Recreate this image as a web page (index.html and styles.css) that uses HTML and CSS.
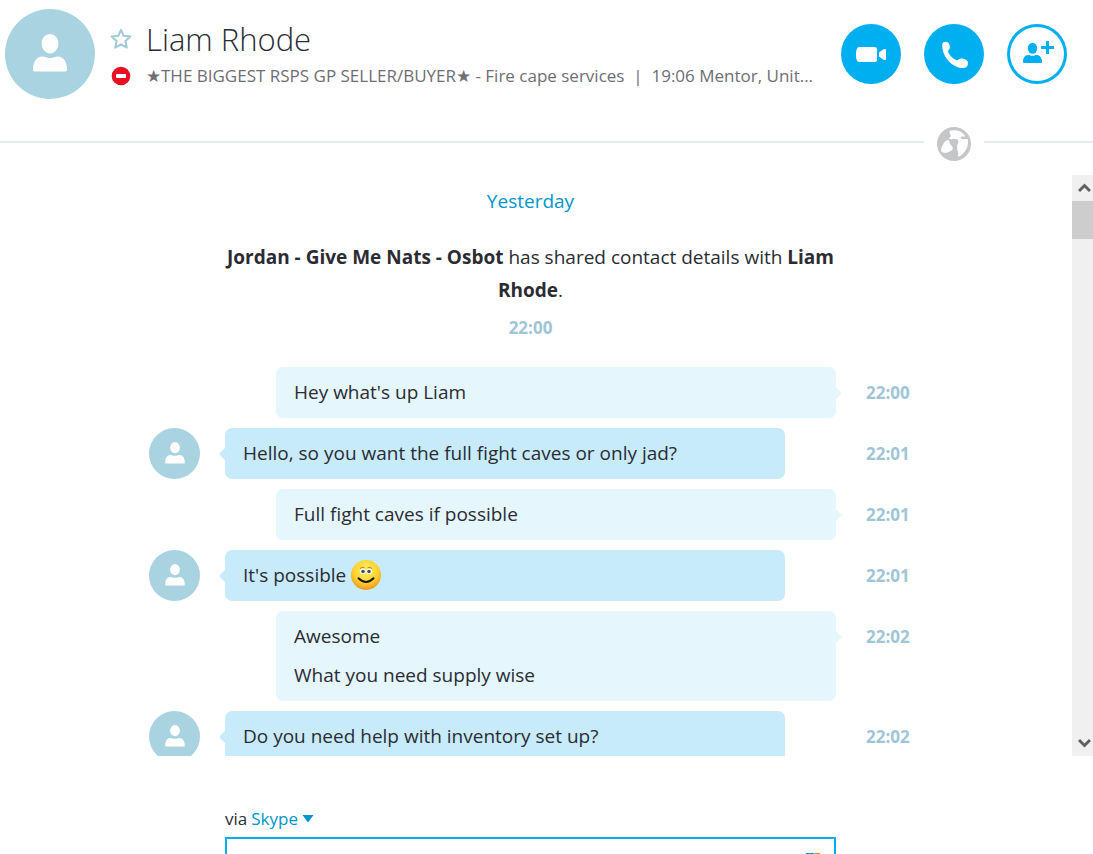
FILE: index.html
```html
<!DOCTYPE html>
<html lang="en">
<head>
    <meta charset="UTF-8">
    <meta name="viewport" content="width=device-width, initial-scale=1.0">
    <title>Liam Rhode</title>
    <link rel="stylesheet" href="styles.css">
</head>
<body>
    <!-- Shared icons -->
    <svg class="sprite" aria-hidden="true">
        <symbol id="icon-person" viewBox="0 0 34 40">
            <ellipse cx="17" cy="9.700" rx="8.500" ry="9.700"/>
            <path d="M2 37.500C.7 37.500 0 37 0 35.500 0 28 3.500 22.500 9 22.500c3.500 0 4 1.500 8 1.500s4.500-1.500 8-1.500c5.500 0 9 5.500 9 13 0 1.500-.7 2-2 2z"/>
        </symbol>
    </svg>

    <header class="header">
        <div class="avatar avatar-large">
            <svg aria-hidden="true"><use href="#icon-person"/></svg>
        </div>
        <div class="contact">
            <div class="contact-row">
                <button class="icon-btn" aria-label="Add to favourites">
                    <svg width="22" height="22" viewBox="0 0 22 22" fill="none" stroke="#a2c9d9" stroke-width="2" stroke-linejoin="round" aria-hidden="true">
                        <path d="M11 1.800l2.700 6 6.700.7-5 4.500 1.400 6.600-5.800-3.300-5.800 3.300L6.600 13l-5-4.500 6.700-.7z"/>
                    </svg>
                </button>
                <h1>Liam Rhode</h1>
            </div>
            <div class="contact-row">
                <svg class="presence" width="22" height="20" viewBox="0 0 22 20" role="img" aria-label="Do not disturb">
                    <circle cx="11" cy="10" r="9.300" fill="#e81123"/>
                    <rect x="6" y="8" width="10" height="4" rx="1" fill="#fff"/>
                </svg>
                <p class="mood">★THE BIGGEST RSPS GP SELLER/BUYER★ - Fire cape services&nbsp; |&nbsp; 19:06 Mentor, Unit...</p>
            </div>
        </div>
        <div class="call-actions">
            <button class="round-btn" aria-label="Video call">
                <svg width="60" height="60" viewBox="0 0 60 60" fill="#fff" aria-hidden="true">
                    <path d="M18 23h15.500q2.500 0 2.500 2.500v10q0 2.500-2.500 2.500H18q-3 0-3-7.500t3-7.500z"/>
                    <path d="M38 28.500l4.500-3.200q2.500-1 2.500.7v9q0 1.700-2.500.7L38 32.500z"/>
                </svg>
            </button>
            <button class="round-btn" aria-label="Call">
                <svg width="60" height="60" viewBox="0 0 60 60" fill="#fff" aria-hidden="true">
                    <path d="M18.200 20.500c0-1.500 1.300-2.700 3-2.700 2.300 0 3.700 1 4.300 3.200.7 2.400.5 3.500-.8 4.800-.8.9-.8 1.800-.1 3.200 1.600 3 3.500 5 6.500 6.600 1.400.8 2.400.8 3.300 0 1.500-1.200 2.900-1.300 5.400-.7 3.500.8 4.400 2.300 4.100 5.100-.3 2.600-1.900 4.100-4.900 4.100-5 0-10.600-3-15-7.700-4.100-4.500-5.800-10-5.800-15.900z"/>
                </svg>
            </button>
            <button class="round-btn round-btn-outline" aria-label="Add people">
                <svg width="60" height="60" viewBox="0 0 60 60" fill="#00aff0" aria-hidden="true">
                    <ellipse cx="25.500" cy="24.300" rx="4.700" ry="5.500"/>
                    <path d="M17.200 39c-.8 0-1.200-.4-1.200-1.300 0-3.700 2-6.700 5-6.700 2 0 2.500.8 4.500.8s2.500-.8 4.500-.8c3 0 5 3 5 6.700 0 .9-.4 1.300-1.200 1.300z"/>
                    <path d="M39 17h3v5h5v3h-5v5h-3v-5h-5v-3h5z"/>
                </svg>
            </button>
        </div>
    </header>

    <div class="divider">
        <span class="divider-line"></span>
        <svg class="globe" width="34" height="34" viewBox="0 0 34 34" aria-hidden="true">
            <circle cx="17" cy="17" r="17" fill="#c5c6c8"/>
            <path fill="#fff" d="M12.500 4C18 2.200 25 3.500 28.500 9.500c-1.500.3-3.500-.2-4.700.6-.5 1.200.8 1.900 2.200 1.900h4.800c1.200 7-2 13.500-8.300 17.500-1.700.5-1.500-1.500-1.300-3.200.2-1.800-1.200-2.800-1-5 .2-1.700-.5-3 .6-4.500.8-1.500.7-3-.3-4-2-1.300-5.500-.3-8.300-.8-.5-1.500 1.800-1.800 1.600-3.200-.2-1.800-1.700-2.800-1.300-4.800z"/>
            <path fill="#fff" d="M11.500 13c1.400 1 .8 3 1.900 4.300 1 1.500 2.400 2.200 2.400 4-.2 2.200-2 2.400-3.600 3.500-2.200 1.500-5.900 1.700-7.900-.3-.7-2.300.3-4.200 1.300-6.300 1.200-2.400 3-4.900 5.900-5.200z"/>
        </svg>
        <span class="divider-line divider-end"></span>
    </div>

    <main class="chat">
        <div class="messages" id="messages">
            <div class="column">
                <h2 class="day">Yesterday</h2>

                <div class="notice">
                    <p><strong>Jordan - Give Me Nats - Osbot</strong> has shared contact details with <strong>Liam Rhode</strong>.</p>
                    <time>22:00</time>
                </div>

                <div class="row">
                    <div class="bubble sent"><p>Hey what's up Liam</p></div>
                    <time>22:00</time>
                </div>
                <div class="row">
                    <div class="avatar"><svg aria-hidden="true"><use href="#icon-person"/></svg></div>
                    <div class="bubble received"><p>Hello, so you want the full fight caves or only jad?</p></div>
                    <time>22:01</time>
                </div>
                <div class="row">
                    <div class="bubble sent"><p>Full fight caves if possible</p></div>
                    <time>22:01</time>
                </div>
                <div class="row">
                    <div class="avatar"><svg aria-hidden="true"><use href="#icon-person"/></svg></div>
                    <div class="bubble received">
                        <p>It's possible
                            <svg class="emoticon" viewBox="0 0 30 30" role="img" aria-label="Smile">
                                <defs>
                                    <radialGradient id="face" cx="50%" cy="35%" r="65%">
                                        <stop offset="0" stop-color="#fff06a"/>
                                        <stop offset=".65" stop-color="#ffd02e"/>
                                        <stop offset="1" stop-color="#f0921f"/>
                                    </radialGradient>
                                </defs>
                                <circle cx="15" cy="15" r="15" fill="url(#face)"/>
                                <ellipse cx="11.800" cy="11.300" rx="2.900" ry="2.600" fill="#fff"/>
                                <ellipse cx="18.200" cy="11.300" rx="2.900" ry="2.600" fill="#fff"/>
                                <circle cx="12" cy="11.500" r="1.800" fill="#3f4f68"/>
                                <circle cx="18" cy="11.500" r="1.800" fill="#3f4f68"/>
                                <path d="M9 8.500q2-2 4.500-.8M16.500 7.700q2.500-1.200 4.500.8" fill="none" stroke="#c9791a" stroke-width="1"/>
                                <path d="M7.500 18.300q7.500 7.500 15 0" fill="none" stroke="#1f1408" stroke-width="2" stroke-linecap="round"/>
                            </svg>
                        </p>
                    </div>
                    <time>22:01</time>
                </div>
                <div class="row">
                    <div class="bubble sent">
                        <p>Awesome</p>
                        <p>What you need supply wise</p>
                    </div>
                    <time>22:02</time>
                </div>
                <div class="row">
                    <div class="avatar"><svg aria-hidden="true"><use href="#icon-person"/></svg></div>
                    <div class="bubble received"><p>Do you need help with inventory set up?</p></div>
                    <time>22:02</time>
                </div>
            </div>
        </div>
        <div class="scrollbar">
            <button class="scroll-btn" id="scroll-up" aria-label="Scroll up">
                <svg width="13" height="10" viewBox="0 0 13 10" aria-hidden="true"><path d="M1 8l5.500-5.500L12 8"/></svg>
            </button>
            <div class="scroll-thumb"></div>
            <button class="scroll-btn scroll-down" id="scroll-down" aria-label="Scroll down">
                <svg width="13" height="10" viewBox="0 0 13 10" aria-hidden="true"><path d="M1 2l5.500 5.500L12 2"/></svg>
            </button>
        </div>
    </main>

    <footer class="composer">
        <div class="column">
            <div class="composer-body">
                <div class="via">
                    <span>via</span>
                    <button class="via-btn">Skype
                        <svg width="12" height="8" viewBox="0 0 12 8" aria-hidden="true"><path d="M.5 0h11L6 7.500z" fill="#0095cc"/></svg>
                    </button>
                </div>
                <div class="input-box">
                    <textarea aria-label="Message" rows="2"></textarea>
                    <svg width="20" height="18" viewBox="0 0 20 18" fill="none" stroke-width="2" aria-hidden="true">
                        <path d="M2 1h8" stroke="#0095cc"/>
                        <path d="M11 1h5" stroke="#f07d1a"/>
                        <path d="M1 2v13h17V2" stroke="#8a949b"/>
                    </svg>
                </div>
            </div>
        </div>
    </footer>

    <script>
        const messages = document.getElementById('messages');

        document.getElementById('scroll-up').addEventListener('click', () => {
            messages.scrollBy(0, -60);
        });
        document.getElementById('scroll-down').addEventListener('click', () => {
            messages.scrollBy(0, 60);
        });
    </script>
</body>
</html>
```
FILE: styles.css
```css
:root {
    --blue: #00aff0;
    --link: #0095cc;
    --avatar: #a9d3e1;
    --time: #9fc6d6;
    --sent: #e5f6fd;
    --received: #c7ebfb;
    --text: #2b2c33;
}

* {
    margin: 0;
    padding: 0;
    box-sizing: border-box;
}

body {
    font-family: "Open Sans", "Noto Sans", sans-serif;
    font-size: 19px;
    line-height: 27px;
    color: var(--text);
    background-color: #fff;
    height: 100vh;
    display: flex;
    flex-direction: column;
    overflow: hidden;
}

button {
    border: none;
    background: none;
    font: inherit;
    color: inherit;
    cursor: pointer;
}

svg {
    display: block;
}

.sprite {
    position: absolute;
    width: 0;
    height: 0;
}

/* Header */
.header {
    display: flex;
    align-items: flex-start;
    padding: 9px 26px 28px 5px;
}

.avatar {
    width: 51px;
    height: 51px;
    border-radius: 50%;
    background-color: var(--avatar);
    display: flex;
    align-items: center;
    justify-content: center;
}

.avatar svg {
    width: 20px;
    height: 23px;
    fill: #fff;
}

.avatar-large {
    flex: none;
    width: 90px;
    height: 90px;
}

.avatar-large svg {
    width: 34px;
    height: 40px;
}

.contact {
    flex: 1;
    min-width: 0;
    padding: 7px 24px 0 15px;
}

.contact-row {
    display: flex;
    align-items: center;
    gap: 14px;
}

.icon-btn,
.presence {
    flex: none;
}

h1 {
    font-size: 31px;
    font-weight: 300;
    line-height: 46px;
}

.mood {
    font-size: 17px;
    color: #6e6e75;
    white-space: nowrap;
    overflow: hidden;
    text-overflow: ellipsis;
}

.call-actions {
    display: flex;
    gap: 23px;
    padding-top: 15px;
}

.round-btn {
    width: 60px;
    height: 60px;
    border-radius: 50%;
    background-color: var(--blue);
}

.round-btn-outline {
    background-color: #fff;
    box-shadow: inset 0 0 0 3px var(--blue);
}

.divider {
    display: flex;
    align-items: center;
    gap: 13px;
    margin-bottom: 14px;
}

.divider-line {
    flex: 1;
    height: 2px;
    margin-bottom: 4px;
    background-color: #e6edf0;
}

.divider-end {
    flex: 0 0 109px;
}

/* Conversation */
.chat {
    flex: 1;
    min-height: 0;
    display: flex;
}

.messages {
    flex: 1;
    padding-top: 10px;
    overflow-y: auto;
    scrollbar-width: none;
}

.column {
    max-width: 774px;
    margin: 0 auto;
}

.row {
    display: grid;
    grid-template-columns: 51px 1fr 57px;
    margin-bottom: 10px;
}

.day,
.notice,
.composer-body {
    margin-left: 76px;
    margin-right: 87px;
}

.day {
    font-size: 19px;
    font-weight: 400;
    line-height: 32px;
    text-align: center;
    color: var(--link);
    margin-bottom: 24px;
}

.notice {
    text-align: center;
    line-height: 33px;
    margin-bottom: 21px;
}

time {
    grid-column: 3;
    font-size: 17px;
    font-weight: 700;
    line-height: 51px;
    color: var(--time);
}

.notice time {
    display: block;
    line-height: 36px;
    padding-top: 3px;
}

.bubble {
    position: relative;
    grid-column: 2;
    display: grid;
    gap: 12px;
    padding: 12px 18px;
    border-radius: 7px;
}

.bubble::after {
    content: "";
    position: absolute;
    top: 21px;
    width: 10px;
    height: 10px;
    border-radius: 2px;
    background-color: inherit;
    transform: rotate(45deg);
}

.sent {
    margin: 0 30px 0 76px;
    background-color: var(--sent);
}

.sent::after {
    right: -4px;
}

.received {
    margin: 0 81px 0 25px;
    background-color: var(--received);
}

.received::after {
    left: -4px;
}

.emoticon {
    display: inline-block;
    width: 30px;
    height: 30px;
    margin: -6px 0 -2px;
    vertical-align: middle;
}

/* Scrollbar */
.scrollbar {
    flex: 0 0 21px;
    display: flex;
    flex-direction: column;
    background-color: #f0f0f0;
}

.scroll-btn {
    height: 26px;
    display: flex;
    align-items: center;
    justify-content: flex-end;
    padding-right: 2px;
}

.scroll-btn path {
    fill: none;
    stroke: #606060;
    stroke-width: 3;
}

.scroll-thumb {
    height: 38px;
    background-color: #cdcdcd;
}

.scroll-down {
    margin-top: auto;
}

/* Composer */
.composer {
    flex: 0 0 98px;
    padding: 49px 21px 0 0;
    overflow: hidden;
}

.via {
    display: flex;
    gap: 4px;
    font-size: 17px;
    margin-bottom: 5px;
}

.via-btn {
    display: flex;
    align-items: center;
    gap: 4px;
    color: var(--link);
}

.input-box {
    display: flex;
    align-items: flex-start;
    border: 2px solid var(--blue);
    padding: 14px 10px;
}

.input-box textarea {
    flex: 1;
    border: none;
    outline: none;
    resize: none;
    font: inherit;
}
```
